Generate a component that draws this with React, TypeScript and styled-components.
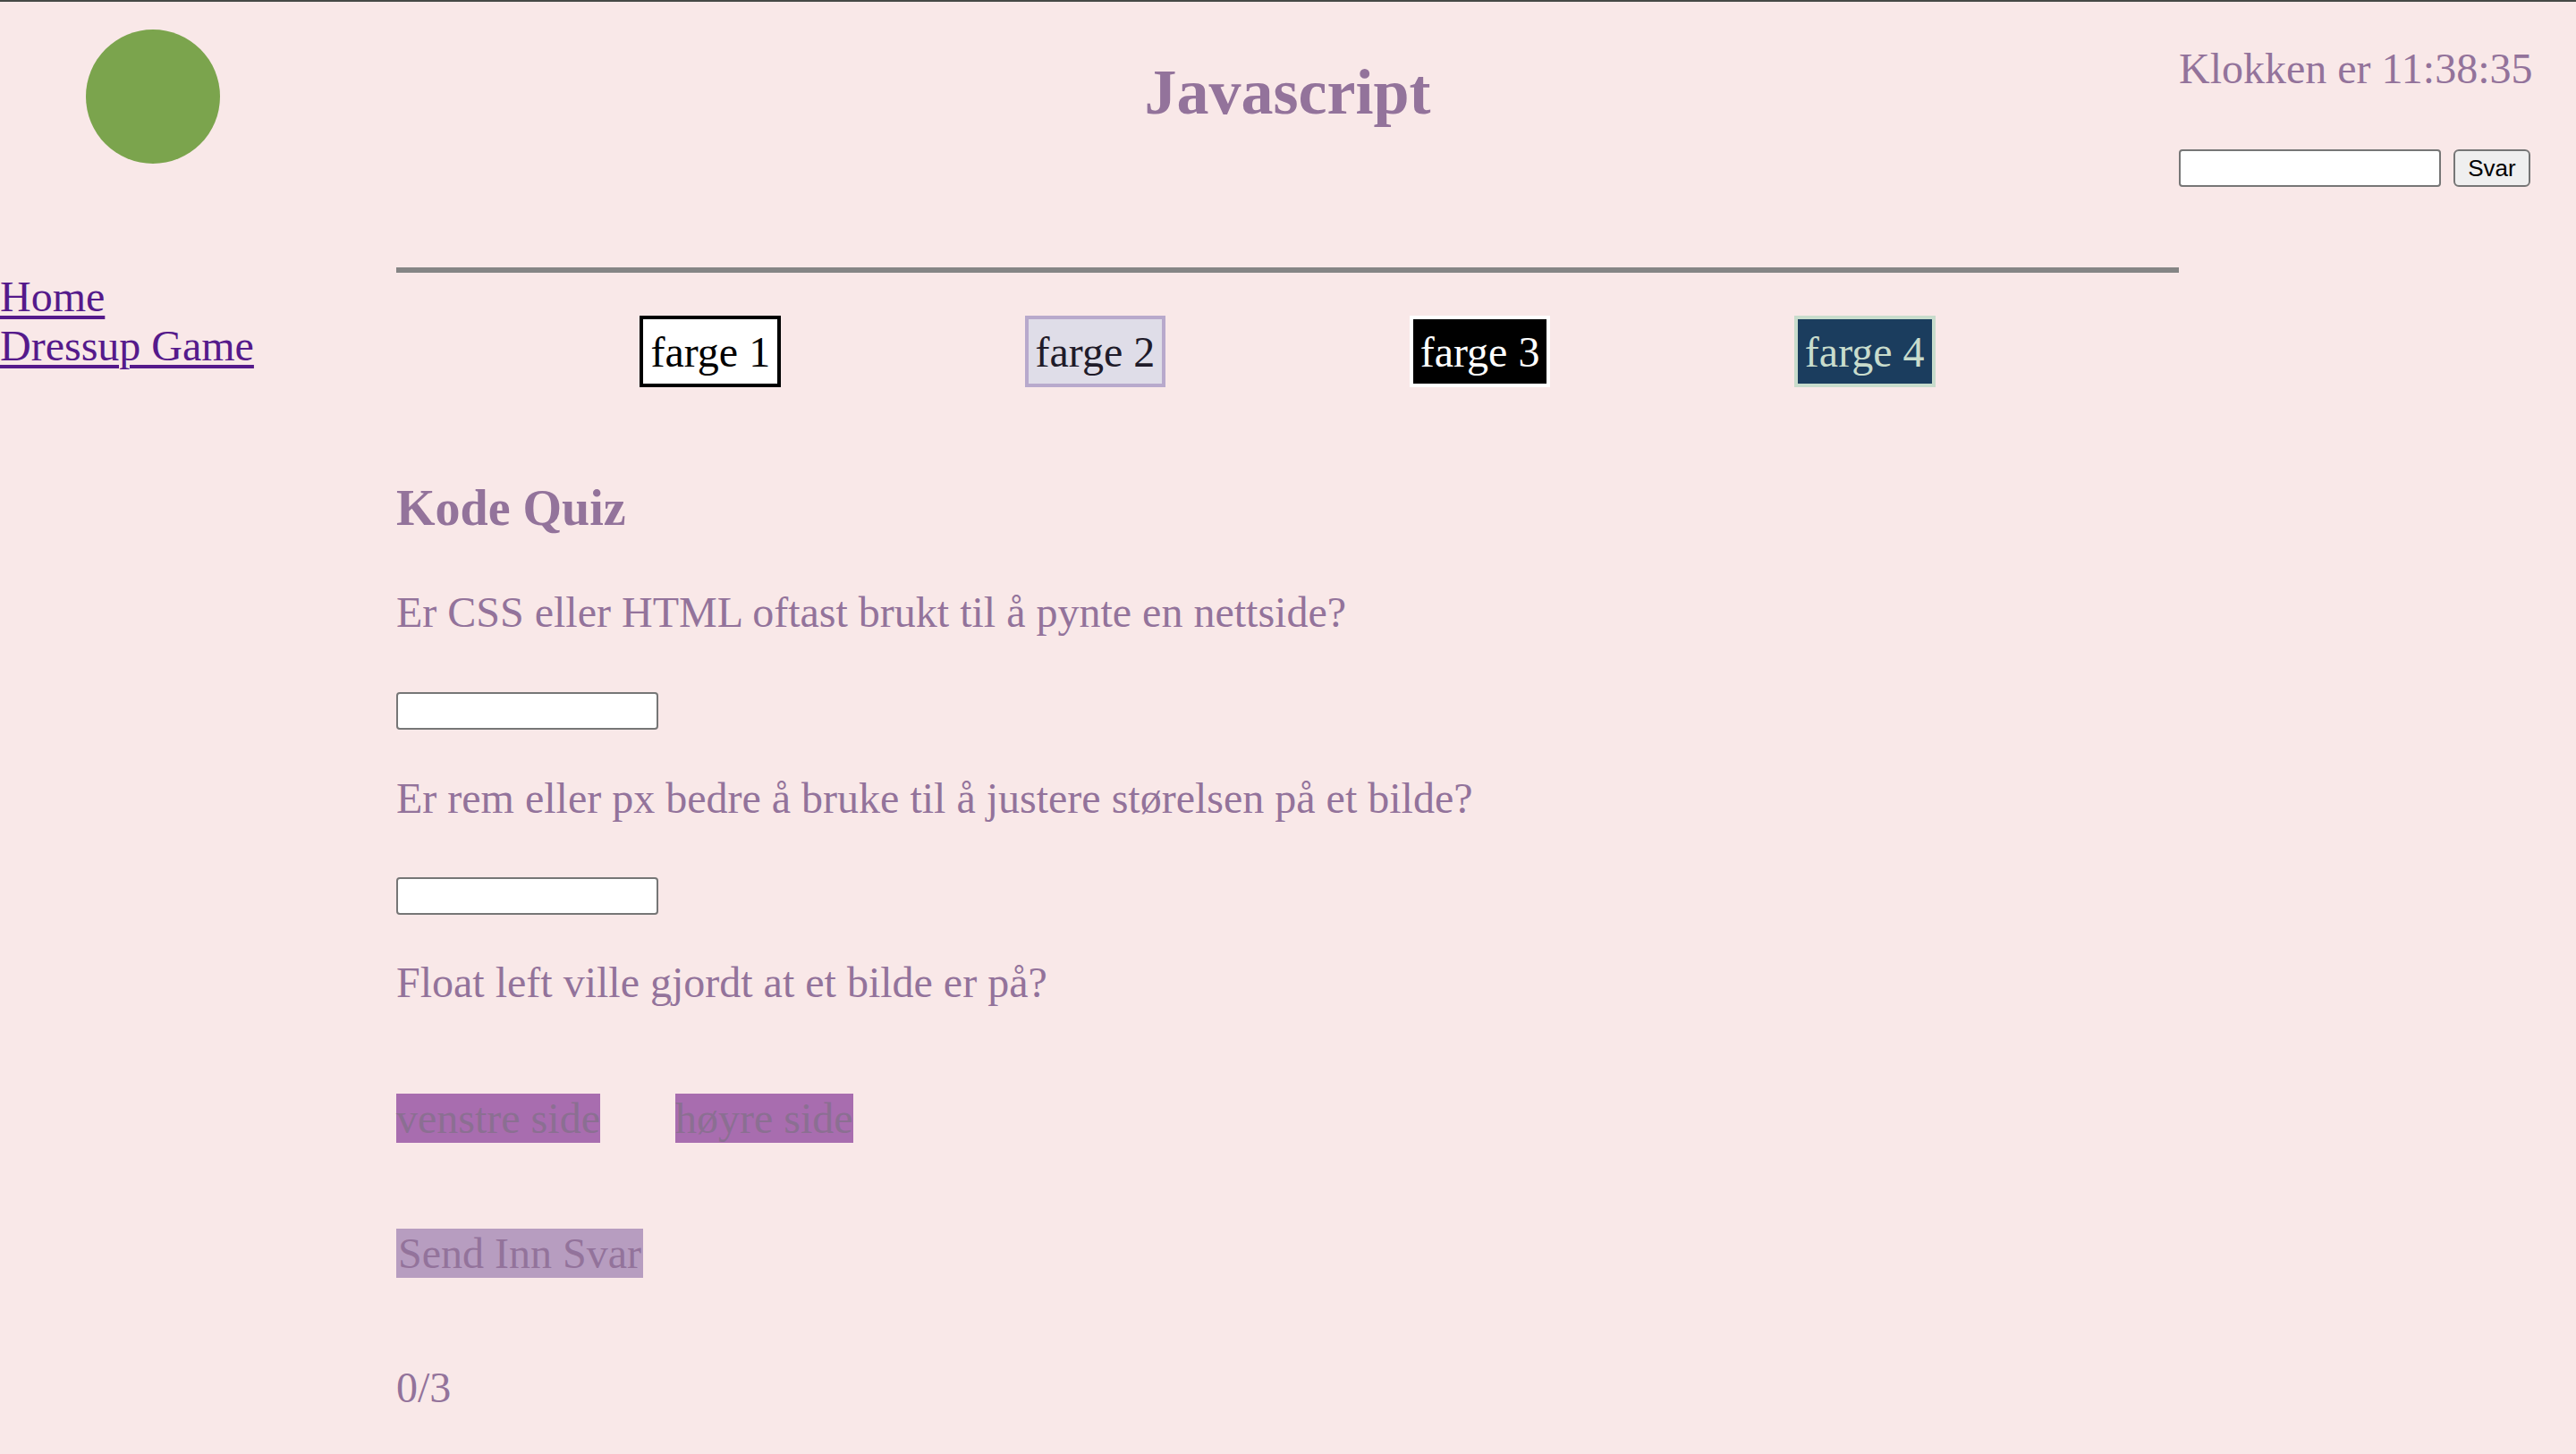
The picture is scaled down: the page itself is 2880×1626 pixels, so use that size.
import React from "react";
import styled, { createGlobalStyle } from "styled-components";

const GlobalStyle = createGlobalStyle`
  html, body {
    margin: 0;
    padding: 0;
  }
  body {
    background: #f9e8e8;
    border-top: 2px solid #464a46;
    font-family: "Liberation Serif", "Times New Roman", serif;
    color: #93739b;
    min-height: 1624px;
  }
`;

const Page = styled.div`
  display: grid;
  grid-template-columns: 443px 1fr 444px;
  grid-template-rows: 297px auto;
`;

const LogoCell = styled.div`
  padding: 31px 0 0 96px;
`;

const Logo = styled.div`
  width: 150px;
  height: 150px;
  border-radius: 50%;
  background: #7ba44d;
`;

const Title = styled.h1`
  margin: 60px 0 0;
  text-align: center;
  font-size: 72px;
  line-height: 83px;
  font-weight: bold;
  color: #93739b;
`;

const ClockCell = styled.div`
  padding-top: 47px;
  display: flex;
  flex-direction: column;
  align-items: flex-start;
`;

const Clock = styled.div`
  font-size: 48px;
  line-height: 55px;
  white-space: nowrap;
`;

const AnswerRow = styled.div`
  margin-top: 63px;
  display: flex;
  gap: 14px;
`;

const TextInput = styled.input`
  box-sizing: border-box;
  width: 293px;
  height: 42px;
  border: 2px solid #767676;
  border-radius: 4px;
  background: #fff;
  margin: ${(p: { $mt?: number }) => p.$mt ?? 0}px 0 0;
  padding: 0 4px;
  display: block;
`;

const SvarButton = styled.button`
  box-sizing: border-box;
  width: 86px;
  height: 42px;
  border: 2px solid #767676;
  border-radius: 6px;
  background: #efefef;
  color: #000;
  font-family: "Liberation Sans", Arial, sans-serif;
  font-size: 26px;
  padding: 0;
`;

const Sidebar = styled.nav`
  padding-top: 5px;
  display: flex;
  flex-direction: column;
`;

const NavLink = styled.a`
  font-size: 48px;
  line-height: 55px;
  color: #551a8b;
  text-decoration: underline;
  text-decoration-thickness: 4px;
  text-underline-offset: 5px;
  width: fit-content;
`;

const Main = styled.main`
  display: flex;
  flex-direction: column;
  align-items: flex-start;
`;

const Rule = styled.hr`
  align-self: stretch;
  margin: 0;
  border: none;
  height: 6px;
  background: #858585;
`;

const SwatchRow = styled.div`
  align-self: stretch;
  margin-top: 48px;
  display: flex;
  justify-content: space-evenly;
`;

const Swatch = styled.button<{ $bg: string; $fg: string; $border: string }>`
  box-sizing: border-box;
  height: 80px;
  padding: 0 8px;
  border: 4px solid ${(p) => p.$border};
  background: ${(p) => p.$bg};
  color: ${(p) => p.$fg};
  font-family: "Liberation Serif", "Times New Roman", serif;
  font-size: 48px;
  line-height: 55px;
  white-space: nowrap;
`;

const QuizTitle = styled.h2`
  margin: 103px 0 0;
  font-size: 56px;
  line-height: 64px;
  font-weight: bold;
`;

const Question = styled.p<{ $mt: number }>`
  margin: ${(p) => p.$mt}px 0 0;
  font-size: 48px;
  line-height: 55px;
`;

const ChoiceRow = styled.div`
  margin-top: 97px;
  display: flex;
  gap: 84px;
`;

const Choice = styled.button`
  height: 55px;
  padding: 0;
  border: none;
  background: #a86daf;
  color: #8b6f92;
  font-family: "Liberation Serif", "Times New Roman", serif;
  font-size: 48px;
  line-height: 55px;
  white-space: nowrap;
`;

const SubmitButton = styled.button`
  margin-top: 96px;
  height: 55px;
  padding: 0 2px;
  border: none;
  background: #b79dc0;
  color: #93739b;
  font-family: "Liberation Serif", "Times New Roman", serif;
  font-size: 48px;
  line-height: 55px;
  white-space: nowrap;
`;

const Score = styled.div`
  margin-top: 95px;
  font-size: 48px;
  line-height: 55px;
`;

const swatches = [
  { label: "farge 1", bg: "#ffffff", fg: "#000000", border: "#000000" },
  { label: "farge 2", bg: "#dfdde8", fg: "#1f1b2a", border: "#b8a9cc" },
  { label: "farge 3", bg: "#000000", fg: "#ffffff", border: "#ffffff" },
  { label: "farge 4", bg: "#1b3d5e", fg: "#c8dccc", border: "#c8dccc" },
];

export default function App() {
  return (
    <>
      <GlobalStyle />
      <Page>
        <LogoCell>
          <Logo />
        </LogoCell>
        <div>
          <Title>Javascript</Title>
        </div>
        <ClockCell>
          <Clock>Klokken er 11:38:35</Clock>
          <AnswerRow>
            <TextInput type="text" />
            <SvarButton>Svar</SvarButton>
          </AnswerRow>
        </ClockCell>

        <Sidebar>
          <NavLink href="#">Home</NavLink>
          <NavLink href="#">Dressup Game</NavLink>
        </Sidebar>
        <Main>
          <Rule />
          <SwatchRow>
            {swatches.map((s) => (
              <Swatch key={s.label} $bg={s.bg} $fg={s.fg} $border={s.border}>
                {s.label}
              </Swatch>
            ))}
          </SwatchRow>
          <QuizTitle>Kode Quiz</QuizTitle>
          <Question $mt={57}>Er CSS eller HTML oftast brukt til å pynte en nettside?</Question>
          <TextInput type="text" $mt={62} />
          <Question $mt={49}>Er rem eller px bedre å bruke til å justere størelsen på et bilde?</Question>
          <TextInput type="text" $mt={61} />
          <Question $mt={48}>Float left ville gjordt at et bilde er på?</Question>
          <ChoiceRow>
            <Choice>venstre side</Choice>
            <Choice>høyre side</Choice>
          </ChoiceRow>
          <SubmitButton>Send Inn Svar</SubmitButton>
          <Score>0/3</Score>
        </Main>
        <div />
      </Page>
    </>
  );
}
